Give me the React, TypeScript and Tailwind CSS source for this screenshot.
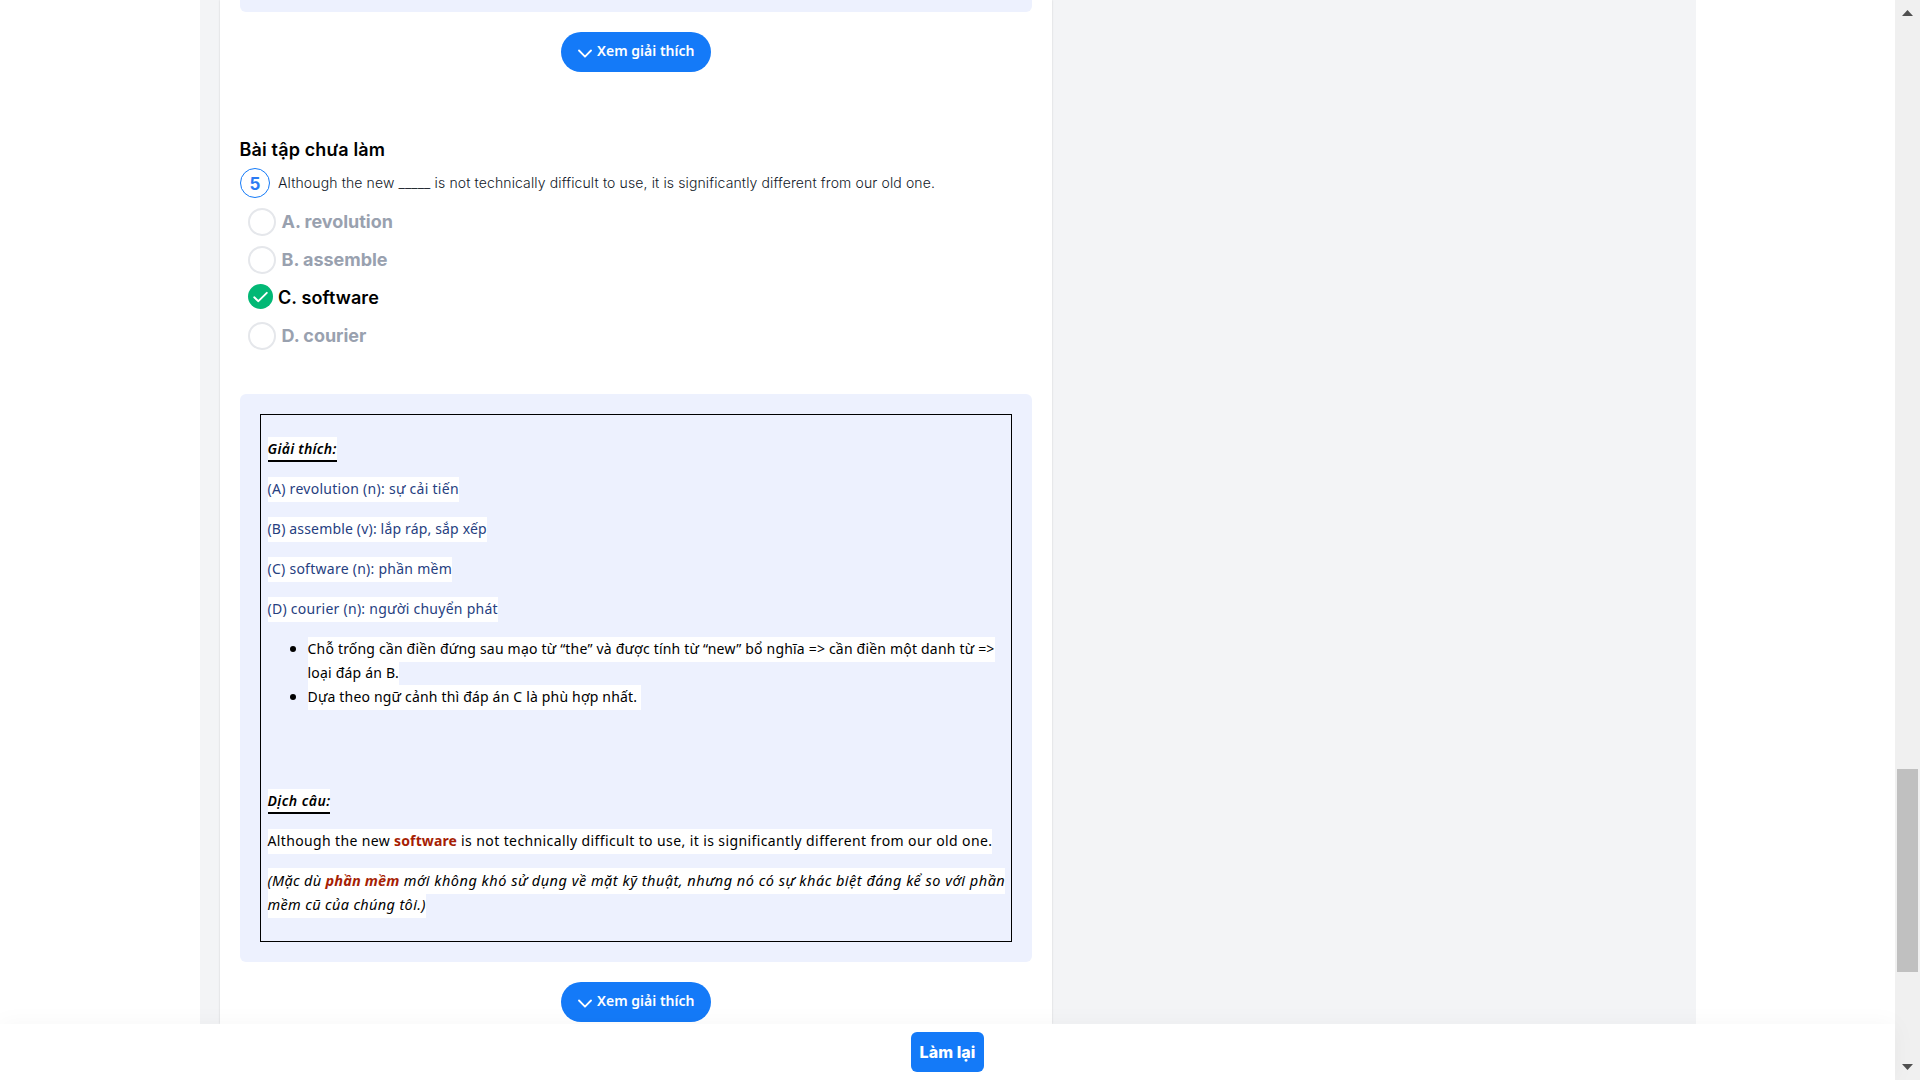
import React from "react";

const highlight = "bg-white pt-[2px] pb-[4px]";

function ExplainButton() {
  return (
    <button className="mx-auto flex h-10 w-[150px] items-center rounded-full bg-[#147af8] pl-[17px] text-white">
      <svg width="14" height="10" viewBox="0 0 14 10" fill="none" className="mt-[3px] mr-[5px]">
        <path d="M1 1.5 L7 7.7 L13 1.5" stroke="currentColor" strokeWidth="1.8" strokeLinecap="round" strokeLinejoin="round" />
      </svg>
      <span className="mb-0.5 font-['Noto_Sans',sans-serif] text-[14px] leading-6 font-semibold tracking-[0.02px] whitespace-nowrap">
        Xem giải thích
      </span>
    </button>
  );
}

function Option({ label }: { label: string }) {
  return (
    <div className="flex h-[38px] items-start pt-[5px] pl-2">
      <span className="size-7 shrink-0 rounded-full border-2 border-gray-200" />
      <span className="ml-[5.5px] text-lg leading-7 font-bold tracking-[-0.03px] text-gray-400">{label}</span>
    </div>
  );
}

function CorrectOption({ label }: { label: string }) {
  return (
    <div className="flex h-[38px] items-start pt-[5px] pl-2">
      <span className="flex size-[25px] shrink-0 items-center justify-center rounded-full bg-[#02b875] text-white">
        <svg width="15" height="12" viewBox="0 0 15 12" fill="none">
          <path d="M1.2 6.3 L5.4 10.2 L13.8 1.8" stroke="currentColor" strokeWidth="1.9" strokeLinecap="round" strokeLinejoin="round" />
        </svg>
      </span>
      <span className="ml-[5px] text-lg leading-7 font-semibold tracking-[0.1px] text-black">{label}</span>
    </div>
  );
}

function Explanation() {
  return (
    <div className="h-[568px] rounded-md bg-[#edf1fe] p-5">
      <div className="h-[528px] border border-black pr-1.5 pl-[6.5px] pt-[22px] font-['Noto_Sans',sans-serif] text-[14px] leading-6 whitespace-nowrap text-black">
        <p className="mb-4">
          <span className="border-b-2 border-black bg-white pt-[2px] pb-[2px] text-[14px] font-semibold tracking-[0.3px] italic">Giải thích:</span>
        </p>
        <div className="text-[#26407f]">
          <p className="mb-4">
            <span className={`${highlight} tracking-[0.28px]`}>(A) revolution (n): sự cải tiến</span>
          </p>
          <p className="mb-4">
            <span className={`${highlight} tracking-[0.17px]`}>(B) assemble (v): lắp ráp, sắp xếp</span>
          </p>
          <p className="mb-4">
            <span className={`${highlight} tracking-[0.26px]`}>(C) software (n): phần mềm</span>
          </p>
          <p className="mb-4">
            <span className={`${highlight} tracking-[0.265px]`}>(D) courier (n): người chuyển phát</span>
          </p>
        </div>
        <ul className="-mt-[17px] mb-[81px] list-disc pt-4 pl-10 marker:text-[16px]">
          <li className="h-12">
            <span className={`${highlight} tracking-[0.194px]`}>
              Chỗ trống cần điền đứng sau mạo từ “the” và được tính từ “new” bổ nghĩa =&gt; cần điền một danh từ =&gt;
              <br />
              loại đáp án B.
            </span>
          </li>
          <li className="h-6">
            <span className={`${highlight} tracking-[0.18px] whitespace-pre-wrap`}>{"Dựa theo ngữ cảnh thì đáp án C là phù hợp nhất.\u00a0"}</span>
          </li>
        </ul>
        <p className="mb-4">
          <span className="border-b-2 border-black bg-white pt-[2px] pb-[2px] text-[14px] font-semibold tracking-[0.45px] italic">Dịch câu:</span>
        </p>
        <p className="mb-4">
          <span className={highlight}>
            <span className="tracking-[0.36px]">Although the new </span>
            <strong className="font-bold tracking-[0.127px] text-[#a61e04]">software</strong>
            <span className="tracking-[0.396px]"> is not technically difficult to use, it is significantly different from our old one.</span>
          </span>
        </p>
        <p className="-mt-[17px] pt-4 text-[14.5px] leading-6 italic">
          <span className={highlight}>
            <span className="tracking-[0.31px]">(Mặc dù </span>
            <strong className="font-bold tracking-[0.15px] text-[#a61e04]">phần mềm</strong>
            <span className="tracking-[0.505px]"> mới không khó sử dụng về mặt kỹ thuật, nhưng nó có sự khác biệt đáng kể so với phần</span>
            <br />
            <span className="tracking-[0.35px]">mềm cũ của chúng tôi.)</span>
          </span>
        </p>
      </div>
    </div>
  );
}

function Scrollbar() {
  return (
    <div className="flex h-full w-[25px] shrink-0 flex-col items-center bg-[#f0f0f0]">
      <svg width="11" height="6" viewBox="0 0 11 6" className="mt-2.5 shrink-0" fill="#505050">
        <path d="M0 6 L5.5 0 L11 6 Z" />
      </svg>
      <div className="mt-[753px] h-[203px] w-[21px] shrink-0 bg-[#c0c0c0]" />
      <svg width="11" height="6" viewBox="0 0 11 6" className="mt-[92px] shrink-0" fill="#505050">
        <path d="M0 0 L5.5 6 L11 0 Z" />
      </svg>
    </div>
  );
}

export default function App() {
  return (
    <div className="flex h-[1080px] w-[1920px] overflow-hidden bg-white font-['Inter',sans-serif]">
      <div className="flex min-w-0 flex-1 flex-col">
        <main className="h-[1024px] shrink-0 overflow-hidden pl-[200px]">
          <div className="h-full w-[1496px] bg-[#f3f4f6] pl-5">
            <section className="h-full w-[832px] bg-white px-5 shadow-[0_0_2px_rgba(0,0,0,0.15)]">
              <div className="mb-5 h-3 rounded-b-md bg-[#edf1fe]" />
              <ExplainButton />
              <h2 className="-ml-[0.5px] mt-16 text-lg leading-7 font-semibold tracking-[0.15px] text-black">Bài tập chưa làm</h2>
              <div className="mt-1 mb-[5px] flex h-[30px] items-center">
                <span className="flex size-[30px] items-center justify-center rounded-full border border-[#147af8] pt-0.5 text-[17px] leading-7 font-bold text-[#2b7bf3]">
                  5
                </span>
                <span className="ml-2 text-[14px] leading-6 font-light tracking-[0.124px] whitespace-nowrap text-[#111827]">
                  Although the new _____ is not technically difficult to use, it is significantly different from our old one.
                </span>
              </div>
              <Option label="A. revolution" />
              <Option label="B. assemble" />
              <CorrectOption label="C. software" />
              <Option label="D. courier" />
              <div className="mt-[39px] mb-5">
                <Explanation />
              </div>
              <ExplainButton />
            </section>
          </div>
        </main>
        <footer className="relative flex flex-1 items-start justify-center bg-white pt-2 shadow-[0_0_24px_rgba(0,0,0,0.04)]">
          <button className="h-10 w-[73px] rounded-md bg-[#147af8] text-base font-extrabold tracking-[0.1px] whitespace-nowrap text-white">
            Làm lại
          </button>
        </footer>
      </div>
      <Scrollbar />
    </div>
  );
}
